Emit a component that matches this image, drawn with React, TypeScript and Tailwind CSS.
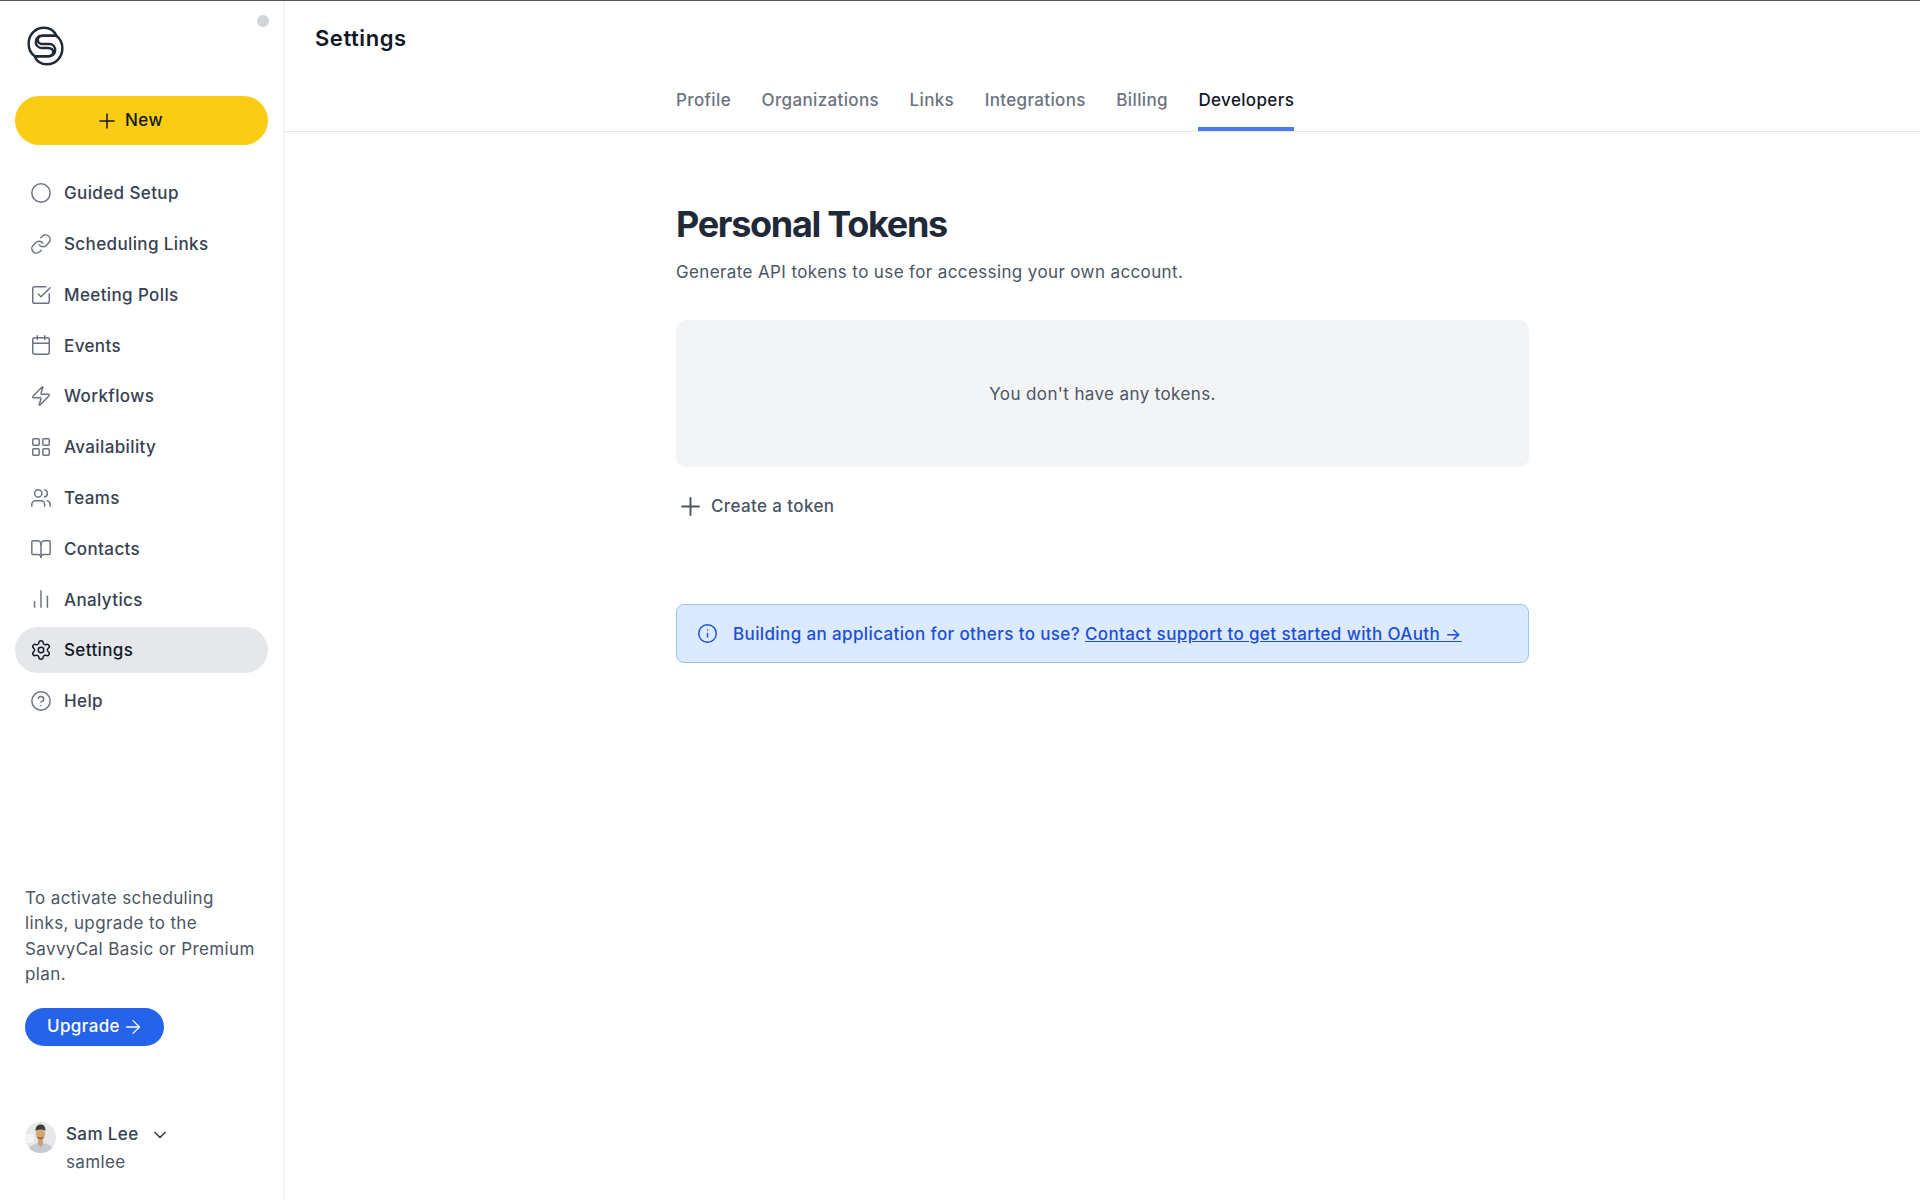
import {
  ArrowRight,
  BookOpen,
  Calendar,
  ChartNoAxesColumn,
  ChevronDown,
  Circle,
  CircleHelp,
  Info,
  LayoutGrid,
  Link,
  Plus,
  Settings,
  SquareCheckBig,
  Users,
  Zap,
} from 'lucide-react';

const navItems = [
  { label: 'Guided Setup', icon: Circle },
  { label: 'Scheduling Links', icon: Link },
  { label: 'Meeting Polls', icon: SquareCheckBig },
  { label: 'Events', icon: Calendar },
  { label: 'Workflows', icon: Zap },
  { label: 'Availability', icon: LayoutGrid },
  { label: 'Teams', icon: Users },
  { label: 'Contacts', icon: BookOpen },
  { label: 'Analytics', icon: ChartNoAxesColumn },
  { label: 'Settings', icon: Settings, active: true },
  { label: 'Help', icon: CircleHelp },
];

const tabs = ['Profile', 'Organizations', 'Links', 'Integrations', 'Billing', 'Developers'];

function Logo() {
  const ring =
    'M170 106C163 90 150 81 132 81C105 81 85 103 85 130C85 148 92 160 104 168L148 168C172 168 172 131 148 131L128 131C108 131 108 106 128 106Z';
  return (
    <svg viewBox="80 76 113 122" className="h-[40px] w-[37px]" fill="none" stroke="#1f2937" strokeWidth="7.5" strokeLinejoin="round">
      <path d={ring} />
      <path d={ring} transform="rotate(180 136.5 137)" />
    </svg>
  );
}

function Avatar() {
  return (
    <svg viewBox="0 0 31 31" className="h-[31px] w-[31px] shrink-0 rounded-full">
      <rect width="31" height="31" fill="#e5e7eb" />
      <rect x="0" y="12" width="9" height="9" fill="#f3f4f6" />
      <path d="M2 31C3 24 9 21 15.5 21C22 21 28 24 29 31Z" fill="#c5cad1" />
      <path d="M13 18H18V23L15.5 25L13 23Z" fill="#c9a37a" />
      <ellipse cx="15.5" cy="12" rx="4.5" ry="6.5" fill="#d1a66f" />
      <path d="M10.5 9C10.5 4 13 2.5 16 2.5C19 2.5 20.5 5 20.5 9C19 7 13 7 10.5 9Z" fill="#3f3a36" />
      <path d="M12 14.5C13 18 18 18 19 14.5C18 16 13 16 12 14.5Z" fill="#7a5a3a" />
    </svg>
  );
}

function Sidebar() {
  return (
    <aside className="relative flex w-[285px] shrink-0 flex-col border-r-2 border-[#f3f4f6] px-[15px]">
      <span className="absolute right-[14px] top-[14px] h-[12px] w-[12px] rounded-full bg-[#d1d5db]" />
      <div className="ml-[12px] mt-[25px]">
        <Logo />
      </div>
      <button className="mt-[30px] flex h-[49px] items-center justify-center gap-[6px] rounded-full bg-[#facc15] pr-[25px] text-[17px] font-medium tracking-[0.38px] text-[#111827]">
        <Plus size={24} strokeWidth={1.5} />
        <span className="pt-[1px]">New</span>
      </button>
      <nav className="mt-[25px] flex flex-col gap-[4.8px]">
        {navItems.map(({ label, icon: Icon, active }) => (
          <a
            key={label}
            className={
              active
                ? 'flex h-[46px] items-center gap-[12px] rounded-full bg-[#e5e7eb] pl-[15px] text-[17px] font-medium tracking-[0.38px] text-[#111827]'
                : 'flex h-[46px] items-center gap-[12px] rounded-full pl-[15px] text-[17px] font-medium tracking-[0.38px] text-[#374151]'
            }
          >
            <Icon size={22} strokeWidth={1.6} className={active ? 'text-[#111827]' : 'text-[#6b7280]'} />
            <span className="pt-[2px]">{label}</span>
          </a>
        ))}
      </nav>
      <div className="mt-auto pb-[25px] pl-[10px] pr-[9px]">
        <p className="text-[17px] leading-[25.5px] tracking-[0.38px] text-[#4b5563]">
          To activate scheduling links, upgrade to the SavvyCal Basic or Premium plan.
        </p>
        <button className="mt-[20px] flex h-[38px] w-[139px] items-center gap-[2px] rounded-full bg-[#2563eb] pl-[22px] text-[17px] font-medium tracking-[0.38px] text-white">
          Upgrade
          <ArrowRight size={22} strokeWidth={1.4} />
        </button>
        <div className="mt-[76px] flex gap-[10px]">
          <Avatar />
          <div className="text-[17px] font-medium tracking-[0.38px]">
            <div className="flex h-[26px] items-center gap-[11px] text-[#374151]">
              Sam Lee
              <ChevronDown size={20} strokeWidth={2} />
            </div>
            <div className="mt-[2px] font-normal text-[#4b5563]">samlee</div>
          </div>
        </div>
      </div>
    </aside>
  );
}

export default function App() {
  return (
    <div className="flex h-screen border-t border-[#555a60] bg-white font-['Inter',sans-serif]">
      <Sidebar />
      <main className="min-w-0 flex-1">
        <header className="border-b border-[#e5e7eb]">
          <h1 className="pl-[30px] pt-[22px] text-[22px] font-semibold leading-[30px] tracking-[0.55px] text-[#111827]">Settings</h1>
          <div className="mx-auto mt-[23px] flex w-[853px] gap-[30.5px] text-[17px] font-medium tracking-[0.36px]">
            {tabs.map((tab) =>
              tab === 'Developers' ? (
                <a key={tab} className="h-[55px] border-b-4 border-[#4a7bec] pt-[11.5px] text-[#111827]">
                  {tab}
                </a>
              ) : (
                <a key={tab} className="h-[55px] pt-[11.5px] text-[#6b7280]">
                  {tab}
                </a>
              ),
            )}
          </div>
        </header>
        <section className="mx-auto w-[853px] pt-[69px] text-[17px] tracking-[0.38px]">
          <h2 className="text-[36px] font-bold leading-[46px] tracking-[-1.3px] text-[#1f2937]">Personal Tokens</h2>
          <p className="mt-[12px] leading-[26px] text-[#4b5563]">
            Generate API tokens to use for accessing your own account.
          </p>
          <div className="mt-[35px] flex h-[147px] items-center justify-center rounded-[10px] bg-[#f3f4f6] pt-[2px] text-[#4b5563]">
            You don't have any tokens.
          </div>
          <button className="mt-[25px] flex items-center gap-[6px] font-medium text-[#4b5563]">
            <Plus size={29} strokeWidth={1.6} />
            Create a token
          </button>
          <div className="mt-[83px] flex h-[59px] items-center gap-[15px] rounded-[8px] border border-[#93c5fd] bg-[#dbeafe] pl-[20px] font-medium text-[#1d4ed8]">
            <Info size={21} strokeWidth={1.6} />
            <p className="pt-[2px]">
              Building an application for others to use? <a className="underline">Contact support to get started with OAuth →</a>
            </p>
          </div>
        </section>
      </main>
    </div>
  );
}
